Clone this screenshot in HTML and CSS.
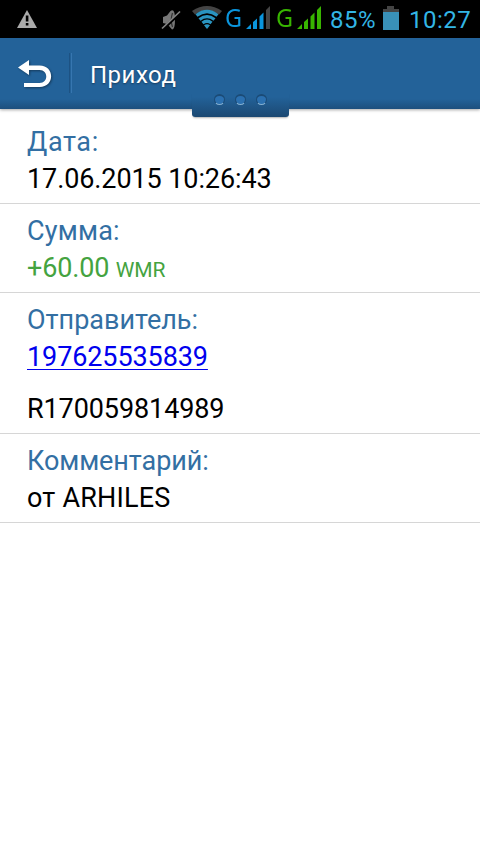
FILE: index.html
```html
<!DOCTYPE html>
<html lang="ru">
<head>
<meta charset="utf-8">
<title>Приход</title>
<link rel="stylesheet" href="styles.css">
</head>
<body>
<div class="status">
  <svg class="warn" width="20" height="18" viewBox="0 0 20 18"><path d="M10 0L20 18H0Z" fill="#aaa"/><path d="M8.800 5.500h2.600v6H8.800zM8.800 13h2.600v2.500H8.800z" fill="#000"/></svg>
  <svg class="mute" width="20" height="22" viewBox="0 0 20 22"><path d="M2 8L6 6.500L9.500 2Q14-1 14 10Q14 21 11 20.500L8 17L6 15L2 14Z" fill="#777"/><path d="M11.500 4Q9 11 11.500 18" fill="none" stroke="#333" stroke-width="1.200"/><path d="M1 21L19 4" stroke="#000" stroke-width="3"/><path d="M1 19.500L19 2.500" stroke="#858585" stroke-width="1.600"/></svg>
  <svg class="wifi" width="30" height="23" viewBox="0 0 30 23"><path d="M0 5Q15-5 30 5L27 8.500Q15 0 3 8.500Z" fill="#444"/><g fill="none" stroke="#2a94c0" stroke-width="3.300"><path d="M4.500 9.500Q15 1.500 25.500 9.500"/><path d="M7.500 13.500Q15 7.800 22.500 13.500"/><path d="M10.500 17Q15 13.500 19.500 17"/></g><path d="M12 19.300Q15 17 18 19.300L15 23Z" fill="#2a94c0"/></svg>
  <span class="net net-blue">G</span>
  <svg class="bars" width="24" height="23" viewBox="0 0 24 23"><path d="M0 23L5 18V23ZM7 16L11 12.500V23H7ZM13.500 10.500L17.500 6.500V23H13.500Z" fill="#0a95dd"/><path d="M20 4L24 0V23H20Z" fill="#444"/></svg>
  <span class="net net-green">G</span>
  <svg class="bars" width="24" height="23" viewBox="0 0 24 23"><path d="M0 23L5 18V23ZM7 16L11 12.500V23H7ZM13.500 10.500L17.500 6.500V23H13.500ZM20 4L24 0V23H20Z" fill="#38b500"/></svg>
  <span class="percent">85%</span>
  <svg class="battery" width="16" height="24" viewBox="0 0 16 24"><path d="M0 3H4V0H11V3H16V6H0Z" fill="#444"/><path d="M0 6H16V24H0Z" fill="#3991b8"/></svg>
  <span class="clock">10:27</span>
</div>
<header class="bar">
  <svg class="back" width="38" height="34" viewBox="0 0 38 34"><path d="M0 9.500L11 2V7.500H21.500C37 7.500 37 29 21.500 29H6V25H21.500C30.500 25 30.500 12 21.500 12H11V17Z" fill="#fff"/></svg>
  <span class="divider"></span>
  <h1 class="title">Приход</h1>
  <div class="handle"><i class="dot"></i><i class="dot"></i><i class="dot"></i></div>
</header>
<main class="details">
  <section class="row"><div class="label date">Дата:</div><div class="value">17.06.2015 10:26:43</div></section>
  <section class="row"><div class="label sum">Сумма:</div><div class="value amount">+60.00 <small class="unit">WMR</small></div></section>
  <section class="row"><div class="label">Отправитель:</div><div class="value"><a class="link" href="#">197625535839</a></div><div class="value purse">R170059814989</div></section>
  <section class="row"><div class="label comment">Комментарий:</div><div class="value note">от ARHILES</div></section>
</main>
</body>
</html>
```
FILE: styles.css
```css
* { box-sizing: border-box; }
body { margin: 0; height: 854px; overflow: hidden; background: #fff; font-family: Roboto, sans-serif; color: #000; }
svg { display: block; flex: none; }
.status { height: 38px; background: #000; display: flex; align-items: flex-start; white-space: nowrap; color: #33b5e5; }
.warn { margin: 10px 0 0 17px; }
.mute { margin: 9px 0 0 124px; }
.wifi { margin: 6px 0 0 11px; }
.net { flex: none; font-family: "Noto Sans", sans-serif; font-size: 26px; line-height: 38px; width: 20px; margin-left: 3px; margin-top: -2px; transform: scaleX(.9); transform-origin: left; }
.net-blue { color: #0a95dd; }
.net-green { color: #38b500; margin-left: 6px; }
.bars { margin: 6px 0 0 1px; }
.percent { flex: none; width: 47px; margin-left: 9px; font-size: 24px; letter-spacing: .5px; line-height: 40px; }
.battery { margin: 6px 0 0 6px; }
.clock { margin-left: 10px; font-size: 24px; letter-spacing: .5px; line-height: 40px; }
.bar { position: relative; height: 71px; display: flex; align-items: flex-start; background: linear-gradient(#236299 0, #236299 61px, #1d4f7d 71px); box-shadow: 0 1px 3px rgba(0, 0, 0, .35); }
.back { margin: 20px 0 0 18px; filter: drop-shadow(1px 1px 1px rgba(0, 0, 0, .4)); }
.divider { width: 3px; height: 40px; margin: 15px 0 0 13px; border-left: 1px solid #1d5283; border-right: 1px solid #3676b0; }
.title { margin: 0 0 0 18px; font-size: 24px; letter-spacing: .5px; font-weight: 400; line-height: 75px; color: #fff; text-shadow: 0 1px 2px rgba(0, 0, 0, .4); }
.handle { position: absolute; left: 192px; top: 54px; width: 97px; height: 25px; display: flex; justify-content: center; gap: 10px; padding-top: 2px; border-radius: 0 0 3px 3px; background: linear-gradient(#236299 0, #236299 5px, #1b4872 25px); box-shadow: 0 2px 2px -1px rgba(0, 0, 0, .3); }
.dot { width: 11px; height: 11px; border-radius: 50%; background: #2b70b0; border: 1px solid #1b4b76; border-top-width: 2px; border-bottom-color: #83aed0; }
.details { padding-top: 6px; }
.row { padding: 9px 27px 5px; border-bottom: 1px solid #d6d6d6; font-size: 27px; line-height: 37px; white-space: nowrap; }
.label { color: #336fa3; }
.date { letter-spacing: .6px; }
.sum { letter-spacing: .2px; }
.comment { letter-spacing: -.08px; }
.value { letter-spacing: -.1px; }
.note { letter-spacing: .2px; }
.amount { color: #44a340; letter-spacing: -.15px; }
.unit { font-size: 21px; line-height: 1; }
.purse { margin-top: 15px; }
.link { color: #00e; text-decoration: underline; text-decoration-thickness: 1px; text-underline-offset: 3px; }
```
